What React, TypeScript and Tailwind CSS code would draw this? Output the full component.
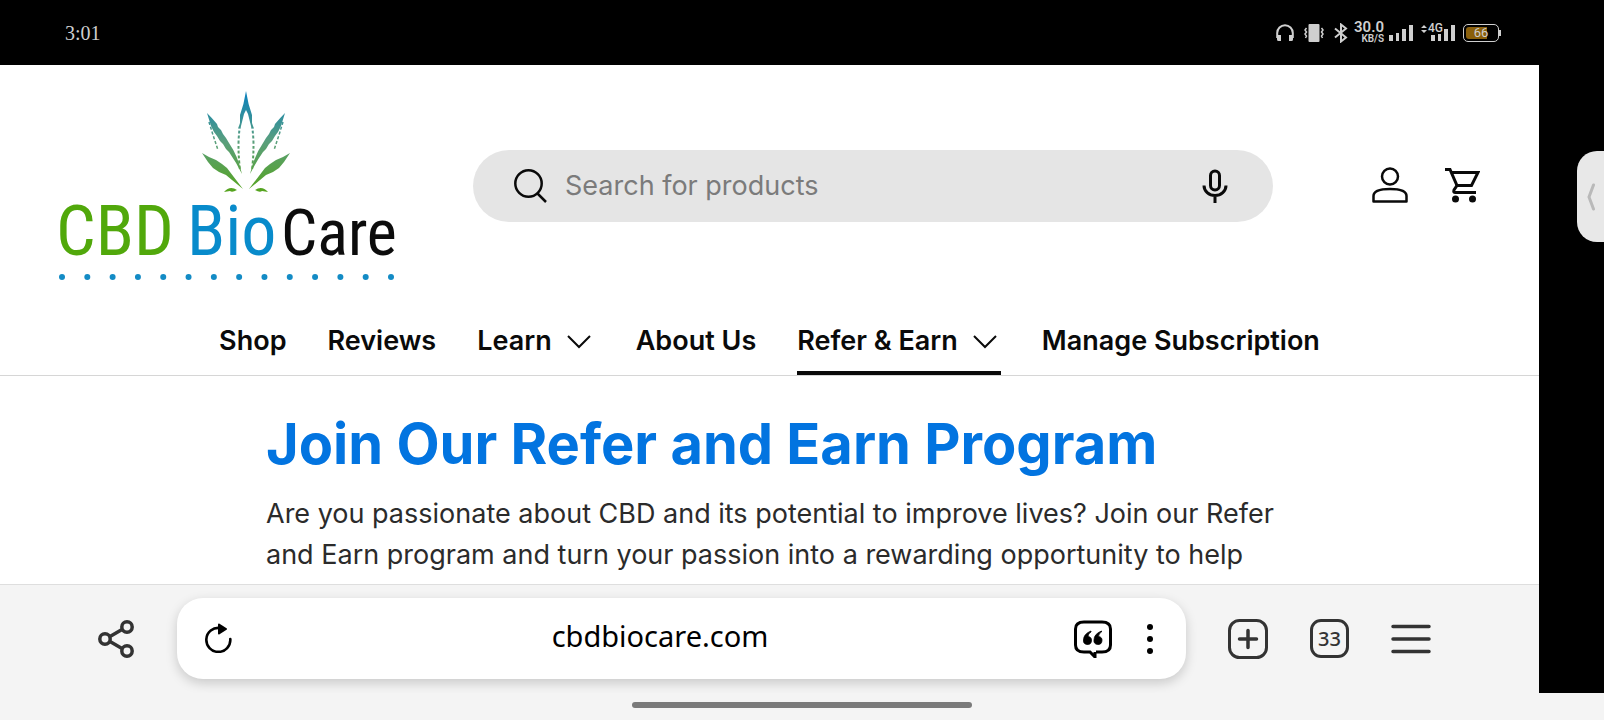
import { ReactNode } from 'react';

const navItems = [
  { label: 'Shop' },
  { label: 'Reviews' },
  { label: 'Learn', hasMenu: true },
  { label: 'About Us' },
  { label: 'Refer & Earn', hasMenu: true, active: true },
  { label: 'Manage Subscription' },
];

const Leaflets = () => (
  <g>
    <path d="M151 23 Q156 28 161 34 L162 37 L165 40 L167 44 L170 48 L173 53 Q182 66 186 84 Q180 72 173 62 L170 59 L167 54 L164 51 L161 46 L158 42 L155 36 Z" />
    <path d="M153 32 L157 45 L162 60" fill="none" stroke="url(#leaf)" strokeWidth="1.500" strokeDasharray="3 2" />
    <path d="M146 63 L153 67 L160 70 L166 74 L171 78 Q177 86 187 99 L176 90 L170 85 L163 82 L157 78 L152 72 Z" />
    <path d="M168 102 Q174 95 181 100 Q176 103 174 101 Z" />
    <path d="M190 1 Q188 14 184 25 L184 33 L182 39 L185 36 L188 24 L190 20 Z" />
    <path d="M184 36 Q181 54 184 80" fill="none" stroke="url(#leaf)" strokeWidth="2" strokeDasharray="3 2" />
  </g>
);

const Logo = () => (
  <svg viewBox="0 0 340 192" className="w-[340px] h-48 shrink-0" role="img" aria-label="CBD BioCare">
    <defs>
      <linearGradient id="leaf" gradientUnits="userSpaceOnUse" x1="0" y1="2" x2="0" y2="102">
        <stop offset="0" stopColor="#0a80bd" />
        <stop offset="0.5" stopColor="#5a9f7c" />
        <stop offset="1" stopColor="#55a41c" />
      </linearGradient>
    </defs>
    <g fill="url(#leaf)">
      <Leaflets />
      <g transform="translate(380 0) scale(-1 1)">
        <Leaflets />
      </g>
    </g>
    <g style={{ fontFamily: '"Roboto Condensed", "Liberation Sans Narrow", "Liberation Sans", sans-serif' }}>
      <text x="0" y="165" fontSize="70" fill="#51a80b">CBD</text>
      <text x="131" y="165" fontSize="70" fill="#088bcb">Bio</text>
      <text x="225" y="165" fontSize="64" fill="#0c0c0c">Care</text>
    </g>
    <g fill="#138bc5">
      {Array.from({ length: 14 }, (_, i) => (
        <circle key={i} cx={6 + (i * 329) / 13} cy="187" r="3" />
      ))}
    </g>
  </svg>
);

const StatusBar = () => (
  <div className="h-[65px] shrink-0 bg-black text-[#cfcfcf] flex items-center justify-between pl-[65px] pr-[103px]">
    <time className="text-xl font-['Liberation_Serif',serif]">3:01</time>
    <div className="flex items-center font-['Roboto',sans-serif]">
      <svg viewBox="0 0 18 18" className="w-[18px] h-[18px]" fill="none" stroke="currentColor" strokeWidth="2">
        <path d="M1.2 14V9a7.8 7.8 0 0 1 15.6 0v5" />
        <path d="M1 11h4v6H2.500Q1 17 1 15.500ZM17 11h-4v6h2.500Q17 17 17 15.500Z" fill="currentColor" stroke="none" />
      </svg>
      <svg viewBox="0 0 20 20" className="w-5 h-5 ml-[10px]" fill="none" stroke="currentColor" strokeWidth="1.500">
        <rect x="4.500" y="1" width="11" height="18" rx="1" fill="currentColor" stroke="none" />
        <path d="M2.500 5l-1.500 2 1.500 2-1.500 2 1.500 2-1 2M17.500 5l1.500 2-1.500 2 1.500 2-1.500 2 1 2" />
      </svg>
      <svg viewBox="0 0 14 20" className="w-3.5 h-5 ml-[10px]" fill="none" stroke="currentColor" strokeWidth="2">
        <path d="M1 5.500L12 14.500L7 18.500V1.500L12 5.500L1 14.500" />
      </svg>
      <div className="ml-1.5 flex flex-col items-end text-[10px] leading-[10px] font-semibold">
        <span className="text-[15px] leading-[13px]">30.0</span>
        <span>KB/S</span>
      </div>
      <svg viewBox="0 0 24 18" className="w-6 h-[18px] ml-[5px]" fill="currentColor">
        <path d="M0 11h4v6H0zM7 9h3v8H7zM13 5h4v12h-4zM20 1h4v16h-4z" />
      </svg>
      <div className="ml-2 flex items-start">
        <svg viewBox="0 0 6 10" className="w-1.5 h-2.5" fill="currentColor">
          <path d="M0 4l3-3 3 3zM0 6l3 3 3-3z" />
        </svg>
        <span className="ml-px text-xs leading-[9px] font-medium">4G</span>
        <svg viewBox="0 0 24 18" className="w-6 h-[18px] -ml-3" fill="currentColor">
          <path d="M0 11h4v6H0zM7 10h3v7H7zM13 5h4v12h-4zM20 1h4v16h-4z" />
        </svg>
      </div>
      <div className="ml-2 flex items-center">
        <div className="relative w-9 h-[18px] rounded-[5px] border border-[#cfcfcf] overflow-hidden flex items-center justify-center">
          <span className="absolute inset-y-0.5 left-0.5 w-[21px] rounded-l-[3px] bg-[#8a5f0b]" />
          <span className="relative text-[13px] leading-none">66</span>
        </div>
        <span className="w-0.5 h-1.5 bg-[#cfcfcf]" />
      </div>
    </div>
  </div>
);

const SearchBox = () => (
  <form className="flex-1 min-w-0 h-[72px] ml-[77px] rounded-full bg-[#e5e5e5] flex items-center pl-[41px] pr-[45px]">
    <svg viewBox="0 0 33 34" className="w-[33px] h-[34px] shrink-0" fill="none" stroke="#0a0a0a" strokeWidth="2.500">
      <circle cx="14.500" cy="14.500" r="13.200" />
      <path d="M23.500 24.500L32 33" />
    </svg>
    <input
      type="search"
      aria-label="Search for products"
      placeholder="Search for products"
      className="flex-1 min-w-0 ml-[18px] bg-transparent outline-none text-[27px] placeholder:text-[#7b7b7b]"
    />
    <button type="button" aria-label="Search by voice" className="shrink-0">
      <svg viewBox="0 0 26 34" className="w-[26px] h-[34px]" fill="none" stroke="#0a0a0a" strokeWidth="3">
        <rect x="8.500" y="2" width="9" height="19" rx="4.500" />
        <path d="M2 16.500a11 10 0 0 0 22 0M13 27v7" />
      </svg>
    </button>
  </form>
);

const Chevron = () => (
  <svg viewBox="0 0 24 14" className="w-6 h-3.5" fill="none" stroke="currentColor" strokeWidth="2">
    <path d="M1 1l11 11L23 1" />
  </svg>
);

const SiteHeader = () => (
  <header className="shrink-0 border-b border-[#d6d6d6] text-[#0a0a0a]">
    <div className="flex items-center pt-[25px] pb-6 pl-14 pr-[59px]">
      <Logo />
      <SearchBox />
      <a href="#account" aria-label="Account" className="ml-[99px] pb-0.5">
        <svg viewBox="0 0 36 36" className="w-9 h-9" fill="none" stroke="currentColor" strokeWidth="2.500">
          <circle cx="18" cy="9.500" r="8" />
          <path d="M1.500 34.500V29Q1.500 22 18 22T34.500 29V34.500Z" strokeLinejoin="round" />
        </svg>
      </a>
      <a href="#cart" aria-label="Cart" className="ml-[37px] pb-0.5">
        <svg viewBox="0 0 35 36" className="w-[35px] h-9" fill="none" stroke="currentColor" strokeWidth="3">
          <path d="M0 2.500H5L12 18.500H26.500L33 5.500H6.500" />
          <path d="M12 18.500L9 23Q8 25.500 10.500 25.500H31" />
          <circle cx="10.500" cy="32" r="3.500" fill="currentColor" stroke="none" />
          <circle cx="27.500" cy="32" r="3.500" fill="currentColor" stroke="none" />
        </svg>
      </a>
    </div>
    <nav className="flex justify-center gap-[41px] h-[69px] text-[27px] font-semibold">
      {navItems.map((item) => (
        <a
          key={item.label}
          href="#"
          className={`flex items-center gap-[15px] pt-1.5 whitespace-nowrap border-b-4 ${item.hasMenu ? 'pr-1' : ''} ${
            item.active ? 'border-[#0a0a0a]' : 'border-transparent'
          }`}
        >
          {item.label}
          {item.hasMenu && <Chevron />}
        </a>
      ))}
    </nav>
  </header>
);

const IconButton = ({ label, className, children }: { label: string; className?: string; children: ReactNode }) => (
  <button type="button" aria-label={label} className={`shrink-0 text-[#333] ${className ?? ''}`}>
    {children}
  </button>
);

const BrowserBar = () => (
  <div className="h-[109px] shrink-0 bg-[#f4f4f4] border-t border-[#dedede] flex items-start pt-[13px] pl-[98px] pr-[108px]">
    <div className="flex-1 min-w-0 h-[81px] flex items-center">
      <IconButton label="Share">
        <svg viewBox="0 0 36 38" className="w-9 h-[38px]" fill="none" stroke="currentColor" strokeWidth="3.500">
          <circle cx="7" cy="19" r="5.200" />
          <circle cx="29" cy="7" r="5.200" />
          <circle cx="29" cy="31" r="5.200" />
          <path d="M12 16.500L24 9.500M12 21.500L24 28.500" />
        </svg>
      </IconButton>
      <div className="flex-1 min-w-0 h-full ml-[43px] bg-white rounded-[26px] shadow-[0_4px_12px_rgba(0,0,0,0.18)] flex items-center pl-7 pr-8">
        <IconButton label="Reload" className="pb-0.5">
          <svg viewBox="0 0 27 30" className="w-[27px] h-[30px]" fill="none" stroke="#000" strokeWidth="2.600">
            <path d="M15 5A12 12 0 1 0 25.300 16" strokeLinecap="round" />
            <path d="M14 1.500L21 6L14 10.500Z" fill="#000" strokeWidth="2" strokeLinejoin="round" />
          </svg>
        </IconButton>
        <input
          type="text"
          aria-label="Address"
          defaultValue="cbdbiocare.com"
          className="flex-1 min-w-0 h-full ml-[14px] pb-1.5 bg-transparent outline-none text-center text-black text-[29px] font-['Noto_Sans','Open_Sans',sans-serif]"
        />
        <IconButton label="Quote">
          <svg viewBox="0 0 38 38" className="w-[38px] h-[38px]" fill="none" stroke="#000" strokeWidth="3">
            <path d="M22 32H28Q36.500 32 36.500 25V9Q36.500 2 28 2H10Q1.500 2 1.500 9V25Q1.500 32 10 32H16L21 37V32" />
            <path d="M17 11Q9.500 14 9.500 20A4 4 0 1 0 14 16.500Q14 13.500 17 12ZM27.500 11Q20 14 20 20A4 4 0 1 0 24.500 16.500Q24.500 13.500 27.500 12Z" fill="#000" stroke="#000" strokeWidth="0.800" />
          </svg>
        </IconButton>
        <IconButton label="More" className="ml-[34px]">
          <svg viewBox="0 0 8 30" className="w-2 h-[30px]" fill="#000">
            <circle cx="4" cy="3" r="3" />
            <circle cx="4" cy="15" r="3" />
            <circle cx="4" cy="27" r="3" />
          </svg>
        </IconButton>
      </div>
      <IconButton label="New tab" className="ml-[42px]">
        <svg viewBox="0 0 40 40" className="w-10 h-10" fill="none" stroke="currentColor" strokeWidth="3" strokeLinecap="round">
          <rect x="1.500" y="1.500" width="37" height="37" rx="10" />
          <path d="M20 11.500V28.500M11.500 20H28.500" strokeWidth="3.500" />
        </svg>
      </IconButton>
      <IconButton
        label="33 open tabs"
        className="ml-[42px] w-[39px] h-[39px] rounded-[11px] border-3 border-current text-[20px] leading-none font-medium font-['Noto_Sans',sans-serif]"
      >
        33
      </IconButton>
      <IconButton label="Menu" className="ml-[42px]">
        <svg viewBox="0 0 40 32" className="w-10 h-8" fill="none" stroke="currentColor" strokeWidth="3.500" strokeLinecap="round">
          <path d="M2 3.500H38M2 16H38M2 28.500H38" />
        </svg>
      </IconButton>
    </div>
  </div>
);

const App = () => (
  <div className="h-screen flex flex-col overflow-hidden bg-white font-['Inter','Liberation_Sans',sans-serif]">
    <StatusBar />
    <div className="flex-1 min-h-0 flex">
      <div className="flex-1 min-w-0 flex flex-col">
        <SiteHeader />
        <main className="flex-1 min-h-0 overflow-hidden pl-[266px] pr-[240px] pt-8">
          <h1 className="text-[56px] leading-[72px] font-bold text-[#0274e0] whitespace-nowrap">
            Join Our Refer and Earn Program
          </h1>
          <p className="mt-[13px] text-[27px] leading-[41px] text-[#2b2b2b]">
            Are you passionate about CBD and its potential to improve lives? Join our Refer and Earn program and
            turn your passion into a rewarding opportunity to help
          </p>
        </main>
        <BrowserBar />
      </div>
      <aside className="w-[65px] shrink-0 bg-black pt-[86px]">
        <button
          type="button"
          aria-label="Open edge panel"
          className="ml-auto w-[27px] h-[91px] rounded-l-[20px] bg-[#e8e8e8] flex items-center justify-center"
        >
          <svg viewBox="0 0 8 28" className="w-2 h-7" fill="none" stroke="#b9b9b9" strokeWidth="3" strokeLinecap="round">
            <path d="M6.500 2L2 14L6.500 26" />
          </svg>
        </button>
      </aside>
    </div>
    <div className="h-[27px] shrink-0 bg-[#f4f4f4] flex items-start justify-center pt-[9px]">
      <div className="w-[340px] h-1.5 rounded-full bg-[#7a7a7a]" />
    </div>
  </div>
);

export default App;
